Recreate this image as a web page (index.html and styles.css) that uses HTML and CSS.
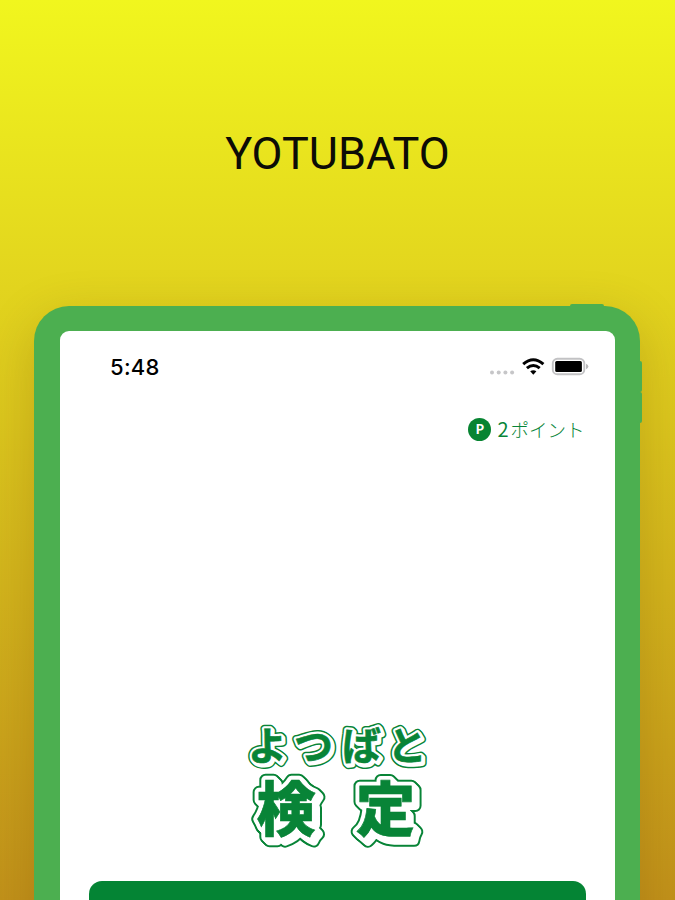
FILE: index.html
```html
<!DOCTYPE html>
<html lang="ja">
<head>
<meta charset="utf-8">
<title>YOTUBATO</title>
<link rel="stylesheet" href="styles.css">
</head>
<body>
<main class="page">
  <h1 class="headline">YOTUBATO</h1>
  <section class="device">
    <span class="button-top"></span>
    <span class="button-side button-up"></span>
    <span class="button-side button-down"></span>
    <div class="screen">
      <header class="status">
        <span class="time">5:48</span>
        <svg class="indicators" width="100" height="22" viewBox="0 0 100 22">
          <g fill="#c6c6c8"><circle cx="3" cy="15.5" r="2"/><circle cx="9.7" cy="15.5" r="2"/><circle cx="16.4" cy="15.5" r="2"/><circle cx="23.1" cy="15.5" r="2"/></g>
          <g fill="none" stroke="#000" stroke-width="3"><path d="M34.2 7.2Q44.3-1.8 54.4 7.2"/><path d="M37.9 11.2Q44.3 5.7 50.7 11.2"/></g>
          <path d="M41.2 14.3Q44.3 12 47.4 14.3L44.3 17.8Z"/>
          <rect x="63.8" y="1.7" width="31.5" height="15.6" rx="4.6" fill="#fff" stroke="#c2c2c4" stroke-width="1.9"/>
          <rect x="66.2" y="4" width="26.7" height="11" rx="1.5"/>
          <path d="M97 6.7Q99.4 7.8 99.4 9.5T97 12.3Z" fill="#b9b9bb"/>
        </svg>
      </header>
      <div class="points">
        <span class="coin">P</span>
        <span class="count">2</span><span class="unit">ポイント</span>
      </div>
      <svg class="logo" width="205" height="145" viewBox="0 0 205 145">
        <defs>
          <g id="kana" class="kana"><text x="13 59 107 152.5" y="49.5">よつばと</text></g>
          <g id="kanji" class="kanji"><text x="21.5 121" y="120.5">検定</text></g>
        </defs>
        <g class="rim-small"><use href="#kana"/><use href="#kana" x="1" y="1"/><use href="#kana" x="2" y="2"/></g>
        <g class="gap-small"><use href="#kana"/><use href="#kana" x="1" y="1"/><use href="#kana" x="2" y="2"/></g>
        <use href="#kana" class="face"/>
        <g class="rim-large"><use href="#kanji"/><use href="#kanji" x="1" y="1"/><use href="#kanji" x="2" y="2"/><use href="#kanji" x="3" y="3"/><use href="#kanji" x="4" y="4"/></g>
        <g class="gap-large"><use href="#kanji"/><use href="#kanji" x="1" y="1"/><use href="#kanji" x="2" y="2"/><use href="#kanji" x="3" y="3"/><use href="#kanji" x="4" y="4"/></g>
        <use href="#kanji" class="face"/>
      </svg>
      <div class="start"></div>
    </div>
  </section>
</main>
</body>
</html>
```
FILE: styles.css
```css
* { box-sizing: border-box; }
body { margin: 0; }
.page {
  width: 675px;
  height: 900px;
  overflow: hidden;
  display: flex;
  flex-direction: column;
  align-items: center;
  background: linear-gradient(#f1f61e, #e3d61e 30%, #c1911a);
}
.headline {
  flex: none;
  height: 306px;
  margin: 0;
  padding-top: 127px;
  font: 400 45px/54px Roboto, sans-serif;
  letter-spacing: 0;
  color: #0c0c06;
}
.device {
  position: relative;
  flex: none;
  width: 606px;
  height: 700px;
  margin-right: 1px;
  padding: 25px 25px 0 26px;
  border-radius: 35px;
  background: #4caf50;
  box-shadow: 0 14px 50px rgba(100, 60, 0, .22);
}
.button-top {
  position: absolute;
  top: -2px;
  right: 36px;
  width: 34px;
  height: 6px;
  border-radius: 2px;
  background: #4caf50;
}
.button-side {
  position: absolute;
  right: -2px;
  width: 5px;
  height: 31px;
  border-radius: 2px;
  background: #4caf50;
}
.button-up { top: 55px; }
.button-down { top: 86px; }
.screen {
  height: 100%;
  display: flex;
  flex-direction: column;
  border-radius: 9px 9px 0 0;
  background: #fff;
}
.screen > * { flex: none; }
.status {
  display: flex;
  justify-content: space-between;
  height: 84px;
  padding: 22px 26.5px 0 50px;
}
.time {
  font: 500 22px/28px Inter, sans-serif;
  letter-spacing: .3px;
  color: #000;
}
.indicators { margin-top: 4px; }
.points {
  display: flex;
  justify-content: flex-end;
  align-items: center;
  height: 28px;
  padding-right: 30.5px;
  color: #078538;
}
.coin {
  width: 23px;
  height: 23px;
  margin-right: 6px;
  border-radius: 50%;
  background: #078432;
  color: #fff;
  font: 900 13px/23px Lato, sans-serif;
  text-align: center;
}
.count {
  margin-right: 2px;
  font: 400 20px/28px "Noto Sans CJK JP", sans-serif;
}
.unit {
  font: 300 18.5px/28px "Noto Sans CJK JP", sans-serif;
}
.logo {
  margin: 267px 0 0 175px;
}
.kana { font: 700 39px "Noto Sans CJK JP", sans-serif; }
.kanji { font: 900 59px "Noto Sans CJK JP", sans-serif; }
.rim-small, .rim-large { fill: #088437; stroke: #088437; stroke-linejoin: round; }
.gap-small, .gap-large { fill: #fff; stroke: #fff; stroke-linejoin: round; }
.rim-small { stroke-width: 8px; }
.gap-small { stroke-width: 5px; }
.rim-large { stroke-width: 12.5px; }
.gap-large { stroke-width: 8.5px; }
.face { fill: #088437; stroke: #088437; stroke-width: .6px; }
.start {
  height: 80px;
  margin: 26px 29px 0 28.5px;
  border-radius: 13px;
  background: #048434;
}
```
